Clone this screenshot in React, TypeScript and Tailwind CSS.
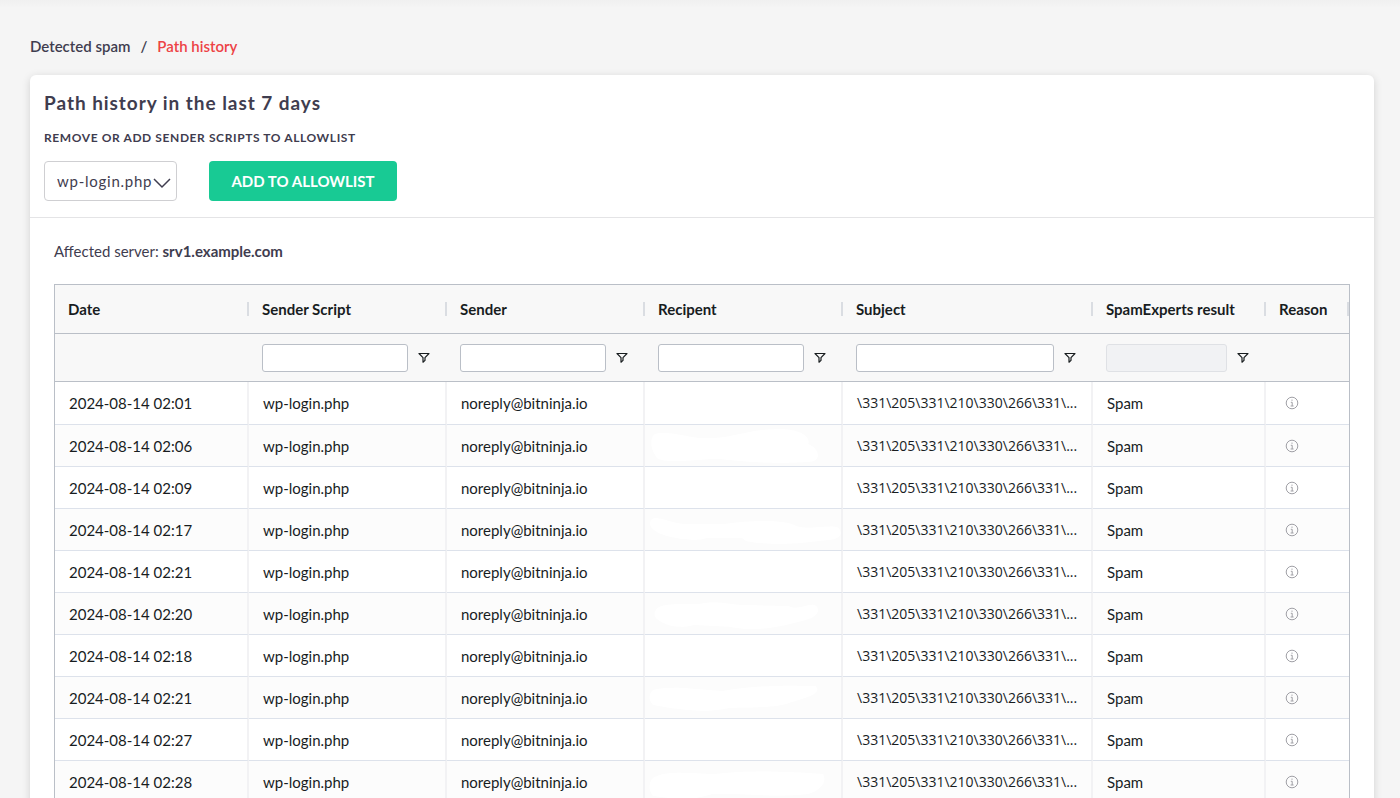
type Row = { date: string; smear?: string };

const rows: Row[] = [
  { date: '2024-08-14 02:01' },
  { date: '2024-08-14 02:06', smear: 'M8 10C12 3 30 8 55 12C85 14 100 4 130 3C155 2 168 10 165 18C178 24 178 36 165 36C145 38 100 37 75 33C50 34 20 38 12 32C8 26 4 18 8 10Z' },
  { date: '2024-08-14 02:09' },
  { date: '2024-08-14 02:17', smear: 'M6 10C10 4 22 12 40 14L80 14C110 9 145 10 153 16C165 20 180 15 194 17C201 22 198 30 185 30L160 33C140 35 115 34 102 31L98 28L62 28C50 33 20 27 12 22C5 18 4 14 6 10Z' },
  { date: '2024-08-14 02:21' },
  { date: '2024-08-14 02:20', smear: 'M14 13C25 8 45 12 60 9C75 6 85 11 105 11L145 12C155 18 168 6 174 13C178 22 165 26 150 29C125 36 105 37 85 33L50 31C30 36 18 30 11 24C8 20 10 16 14 13Z' },
  { date: '2024-08-14 02:18' },
  { date: '2024-08-14 02:21', smear: 'M8 12C25 7 50 11 78 13C110 7 145 7 172 8C180 14 165 20 148 24C130 32 95 28 80 31C55 36 20 29 8 27C3 22 4 16 8 12Z' },
  { date: '2024-08-14 02:27' },
  { date: '2024-08-14 02:28', smear: 'M8 16C20 8 45 11 70 12C100 8 145 9 180 12C184 20 178 28 165 32C130 36 90 31 68 32C45 40 20 36 8 34C3 28 4 20 8 16Z' },
];

const subject = '\\331\\205\\331\\210\\330\\266\\331\\...';

const columns = [
  { label: 'Date', filter: 'none' },
  { label: 'Sender Script', filter: 'text' },
  { label: 'Sender', filter: 'text' },
  { label: 'Recipent', filter: 'text' },
  { label: 'Subject', filter: 'text' },
  { label: 'SpamExperts result', filter: 'disabled' },
  { label: 'Reason', filter: 'none' },
];

function FilterIcon() {
  return (
    <svg viewBox="0 0 12 12" className="size-3 fill-none stroke-[#181d1f]" strokeWidth="1.2" aria-hidden="true">
      <path d="M1 1.5H11L7 5.6V8.4L5 10.2V5.6Z" strokeLinejoin="round" />
    </svg>
  );
}

function InfoIcon() {
  return (
    <svg viewBox="0 0 14 14" className="size-3.5 fill-none stroke-[#a0a0a6]" aria-hidden="true">
      <circle cx="7" cy="7" r="5.8" />
      <path d="M7 3.6V4.8M5.8 6.3H7.2V10M5.6 10H8.6" />
    </svg>
  );
}

const cell = 'border-b border-b-[#dde2eb] border-r-2 border-r-[#f2f2f4] pl-3.5';

export default function App() {
  return (
    <div className="h-screen overflow-y-auto bg-[#f5f5f5] font-['Lato','Open_Sans',sans-serif] text-[15px] leading-5 text-[#3f3d4f] [scrollbar-width:none]">
      <div className="h-2 bg-linear-to-b from-[#f0f0f0] to-[#f5f5f5]" />
      <main className="pr-[26px] pl-[30px] pt-7">
        <nav aria-label="Breadcrumb" className="flex gap-2.5 font-semibold">
          <a href="#detected">Detected spam</a>
          <span>/</span>
          <a href="#history" aria-current="page" className="text-[#ed4245]">Path history</a>
        </nav>

        <section className="mt-[19px] rounded-t-md bg-white shadow-[0_2px_8px_rgba(0,0,0,0.15)]">
          <header className="border-b border-[#e4e4e6] px-3.5 pt-4 pb-4">
            <h1 className="text-[19px] leading-6 font-bold tracking-wider">Path history in the last 7 days</h1>
            <label htmlFor="script" className="mt-[15px] block text-xs font-bold tracking-wider uppercase">
              Remove or add sender scripts to allowlist
            </label>
            <div className="mt-[15px] flex gap-8">
              <div className="relative">
                <select id="script" className="h-10 w-[133px] appearance-none rounded border border-[#cfcfd2] bg-white pl-3 tracking-wider">
                  <option>wp-login.php</option>
                </select>
                <svg viewBox="0 0 18 12" className="pointer-events-none absolute top-4 right-1.5 h-3 w-[18px] fill-none stroke-[#3f3d4f]" strokeWidth="1.5" aria-hidden="true">
                  <path d="M1 2L9 10L17 2" />
                </svg>
              </div>
              <button type="button" className="h-10 w-[188px] rounded bg-[#18ca94] text-[15px] font-bold text-white uppercase">
                Add to allowlist
              </button>
            </div>
          </header>

          <div className="px-6 pt-[23px]">
            <p>
              Affected server: <strong>srv1.example.com</strong>
            </p>
            <div className="mt-[23px] border border-[#babfc7]">
              <table className="w-full table-fixed border-separate border-spacing-0 text-left text-[#181d1f]">
                <colgroup>
                  <col className="w-[194px]" />
                  <col className="w-[198px]" />
                  <col className="w-[198px]" />
                  <col className="w-[198px]" />
                  <col className="w-[250px]" />
                  <col className="w-[173px]" />
                  <col className="w-[83px]" />
                </colgroup>
                <thead className="bg-[#f8f8f8]">
                  <tr>
                    {columns.map((c) => (
                      <th key={c.label} scope="col" className="h-[49px] border-b border-[#babfc7] p-0 font-bold">
                        <div className="flex h-3.5 items-center border-r-2 border-[#dadde2] pl-[13px] whitespace-nowrap">{c.label}</div>
                      </th>
                    ))}
                  </tr>
                  <tr>
                    {columns.map((c) => (
                      <td key={c.label} className="h-12 border-b border-[#babfc7] py-0 pr-[17px] pl-[13px]">
                        {c.filter !== 'none' && (
                          <div className="flex items-center gap-2.5">
                            <input
                              type="text"
                              aria-label={`Filter ${c.label}`}
                              disabled={c.filter === 'disabled'}
                              className="h-7 min-w-0 flex-1 rounded-[3px] border border-[#babfc7] bg-white px-1.5 disabled:border-[#dfe1e5] disabled:bg-[#f1f2f4]"
                            />
                            <button type="button" aria-label={`Open filter menu for ${c.label}`}>
                              <FilterIcon />
                            </button>
                          </div>
                        )}
                      </td>
                    ))}
                  </tr>
                </thead>
                <tbody>
                  {rows.map((r, i) => (
                    <tr key={i} className="h-[42px] first:h-[43px] odd:bg-white even:bg-[#fcfcfc]">
                      <td className={cell}>{r.date}</td>
                      <td className={cell}>wp-login.php</td>
                      <td className={cell}>noreply@bitninja.io</td>
                      <td className="border-r-2 border-b border-r-[#f2f2f4] border-b-[#dde2eb] p-0">
                        {r.smear && (
                          <svg viewBox="0 0 198 40" className="h-10 w-full fill-white" aria-hidden="true">
                            <path d={r.smear} />
                          </svg>
                        )}
                      </td>
                      <td className={`${cell} font-['Open_Sans','Lato',sans-serif] text-sm whitespace-nowrap`}>{subject}</td>
                      <td className={cell}>Spam</td>
                      <td className="border-b border-[#dde2eb] pl-[19px]">
                        <button type="button" aria-label="Show reason" className="block">
                          <InfoIcon />
                        </button>
                      </td>
                    </tr>
                  ))}
                </tbody>
              </table>
            </div>
          </div>
        </section>
      </main>
    </div>
  );
}
